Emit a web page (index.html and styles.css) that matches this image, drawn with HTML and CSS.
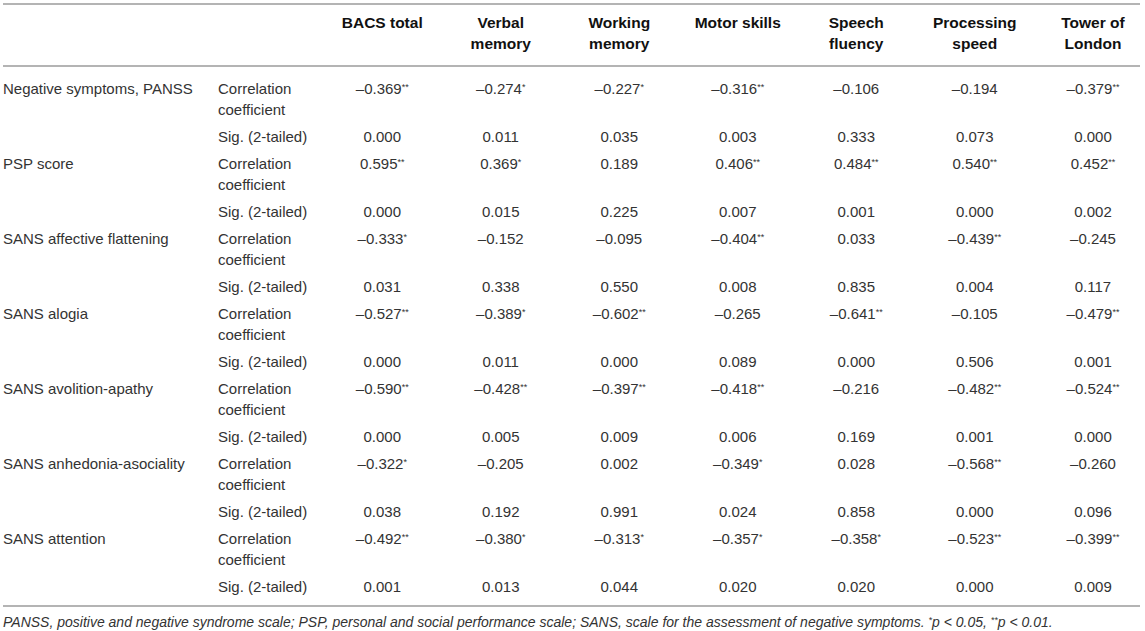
FILE: index.html
```html
<!DOCTYPE html>
<html lang="en">
<head>
<meta charset="utf-8">
<title>Correlations</title>
<link rel="stylesheet" href="styles.css">
</head>
<body>
<div class="page">
<table class="corr">
<colgroup>
<col class="c-label"><col class="c-stat">
<col class="c-data"><col class="c-data"><col class="c-data"><col class="c-data"><col class="c-data"><col class="c-data"><col class="c-last">
</colgroup>
<thead>
<tr>
<th class="lbl"></th><th class="lbl"></th>
<th>BACS total</th><th>Verbal<br>memory</th><th>Working<br>memory</th><th>Motor skills</th><th>Speech<br>fluency</th><th>Processing<br>speed</th><th class="last">Tower of<br>London</th>
</tr>
</thead>
<tbody>
<tr class="corr-row first"><td class="lbl">Negative symptoms, PANSS</td><td class="stat">Correlation coefficient</td><td>–0.369<span class="st">**</span></td><td>–0.274<span class="st">*</span></td><td>–0.227<span class="st">*</span></td><td>–0.316<span class="st">**</span></td><td>–0.106</td><td>–0.194</td><td class="last">–0.379<span class="st">**</span></td></tr>
<tr class="sig-row"><td class="lbl"></td><td class="stat">Sig. (2-tailed)</td><td>0.000</td><td>0.011</td><td>0.035</td><td>0.003</td><td>0.333</td><td>0.073</td><td class="last">0.000</td></tr>

<tr class="corr-row"><td class="lbl">PSP score</td><td class="stat">Correlation coefficient</td><td>0.595<span class="st">**</span></td><td>0.369<span class="st">*</span></td><td>0.189</td><td>0.406<span class="st">**</span></td><td>0.484<span class="st">**</span></td><td>0.540<span class="st">**</span></td><td class="last">0.452<span class="st">**</span></td></tr>
<tr class="sig-row"><td class="lbl"></td><td class="stat">Sig. (2-tailed)</td><td>0.000</td><td>0.015</td><td>0.225</td><td>0.007</td><td>0.001</td><td>0.000</td><td class="last">0.002</td></tr>

<tr class="corr-row"><td class="lbl">SANS affective flattening</td><td class="stat">Correlation coefficient</td><td>–0.333<span class="st">*</span></td><td>–0.152</td><td>–0.095</td><td>–0.404<span class="st">**</span></td><td>0.033</td><td>–0.439<span class="st">**</span></td><td class="last">–0.245</td></tr>
<tr class="sig-row"><td class="lbl"></td><td class="stat">Sig. (2-tailed)</td><td>0.031</td><td>0.338</td><td>0.550</td><td>0.008</td><td>0.835</td><td>0.004</td><td class="last">0.117</td></tr>

<tr class="corr-row"><td class="lbl">SANS alogia</td><td class="stat">Correlation coefficient</td><td>–0.527<span class="st">**</span></td><td>–0.389<span class="st">*</span></td><td>–0.602<span class="st">**</span></td><td>–0.265</td><td>–0.641<span class="st">**</span></td><td>–0.105</td><td class="last">–0.479<span class="st">**</span></td></tr>
<tr class="sig-row"><td class="lbl"></td><td class="stat">Sig. (2-tailed)</td><td>0.000</td><td>0.011</td><td>0.000</td><td>0.089</td><td>0.000</td><td>0.506</td><td class="last">0.001</td></tr>

<tr class="corr-row"><td class="lbl">SANS avolition-apathy</td><td class="stat">Correlation coefficient</td><td>–0.590<span class="st">**</span></td><td>–0.428<span class="st">**</span></td><td>–0.397<span class="st">**</span></td><td>–0.418<span class="st">**</span></td><td>–0.216</td><td>–0.482<span class="st">**</span></td><td class="last">–0.524<span class="st">**</span></td></tr>
<tr class="sig-row"><td class="lbl"></td><td class="stat">Sig. (2-tailed)</td><td>0.000</td><td>0.005</td><td>0.009</td><td>0.006</td><td>0.169</td><td>0.001</td><td class="last">0.000</td></tr>

<tr class="corr-row"><td class="lbl">SANS anhedonia-asociality</td><td class="stat">Correlation coefficient</td><td>–0.322<span class="st">*</span></td><td>–0.205</td><td>0.002</td><td>–0.349<span class="st">*</span></td><td>0.028</td><td>–0.568<span class="st">**</span></td><td class="last">–0.260</td></tr>
<tr class="sig-row"><td class="lbl"></td><td class="stat">Sig. (2-tailed)</td><td>0.038</td><td>0.192</td><td>0.991</td><td>0.024</td><td>0.858</td><td>0.000</td><td class="last">0.096</td></tr>

<tr class="corr-row"><td class="lbl">SANS attention</td><td class="stat">Correlation coefficient</td><td>–0.492<span class="st">**</span></td><td>–0.380<span class="st">*</span></td><td>–0.313<span class="st">*</span></td><td>–0.357<span class="st">*</span></td><td>–0.358<span class="st">*</span></td><td>–0.523<span class="st">**</span></td><td class="last">–0.399<span class="st">**</span></td></tr>
<tr class="sig-row final"><td class="lbl"></td><td class="stat">Sig. (2-tailed)</td><td>0.001</td><td>0.013</td><td>0.044</td><td>0.020</td><td>0.020</td><td>0.000</td><td class="last">0.009</td></tr>
</tbody>
</table>
<p class="note">PANSS, positive and negative syndrome scale; PSP, personal and social performance scale; SANS, scale for the assessment of negative symptoms. <span class="st">*</span>p &lt; 0.05, <span class="st">**</span>p &lt; 0.01.</p>
</div>
</body>
</html>
```
FILE: styles.css
```css
html, body {
  margin: 0;
  padding: 0;
  background: #ffffff;
}

.page {
  padding: 3px 5px 0 3px;
  font-family: "Liberation Sans", Arial, Helvetica, sans-serif;
  color: #333333;
}

.corr {
  width: 1137px;
  border-collapse: collapse;
  table-layout: fixed;
  font-size: 15px;
  line-height: 21px;
}

.c-label { width: 215px; }
.c-stat { width: 105px; }
.c-data { width: 118.5px; }
.c-last { width: 106px; }

.corr thead th {
  border-top: 2px solid #b4b4b4;
  border-bottom: 2px solid #b4b4b4;
  padding: 7px 0 11px;
  font-size: 15.5px;
  font-weight: bold;
  color: #111;
  text-align: center;
  vertical-align: top;
}

.corr th.lbl { text-align: left; }

.corr td {
  padding: 3px 0 3px;
  text-align: center;
  vertical-align: top;
  white-space: nowrap;
}

.corr td.lbl,
.corr td.stat {
  text-align: left;
}

.corr .corr-row td.stat { white-space: normal; }

.corr .last { padding-left: 12px; }

.corr tr.first td { padding-top: 11px; }

.corr tr.final td {
  padding-bottom: 8px;
  border-bottom: 2px solid #b4b4b4;
}

.st {
  font-size: 9px;
  vertical-align: 4px;
  line-height: 0;
}

.note {
  margin: 6px 0 0;
  font-size: 14px;
  font-style: italic;
  color: #333333;
  line-height: 18px;
}
```
